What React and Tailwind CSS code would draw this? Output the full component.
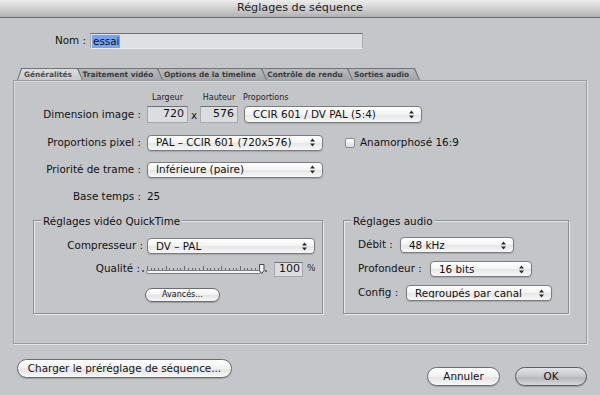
import React from 'react';

const Arrows = () => (
  <svg width="7" height="11" viewBox="0 0 7 11" className="shrink-0 mr-[6px]">
    <path d="M3.5 1.5 L6 4.5 H1 Z M3.5 9.5 L6 6.5 H1 Z" fill="#2b2b2b" />
  </svg>
);

const Popup = ({ w, h = 'h-[16px]', children }) => (
  <div className={`${w} ${h} shrink-0 flex items-center rounded-[4px] border border-[#7c7c7e] bg-[linear-gradient(#ffffff,#f3f3f3_50%,#e6e6e6_52%,#f7f7f7)] shadow-[0_1px_1px_rgba(0,0,0,0.15)]`}>
    <span className="flex-1 pl-[8px] whitespace-nowrap overflow-hidden leading-none">{children}</span>
    <Arrows />
  </div>
);

const Field = ({ w, children }) => (
  <div className={`${w} h-[17px] shrink-0 flex items-center justify-end pr-[3px] bg-[#dcdde0] border border-[#a7a8ab] border-t-[#707072] text-[11px]`}>
    {children}
  </div>
);

const Button = ({ w, h, dark, small, children }) => (
  <div
    className={`${w} ${h} shrink-0 flex items-center justify-center rounded-full border ${
      dark
        ? 'border-[#5e5e60] bg-[linear-gradient(#e2e3e5,#c6c7ca_50%,#b3b4b7_52%,#d6d7da)]'
        : 'border-[#6d6d6f] bg-[linear-gradient(#ffffff,#f1f1f1_50%,#e2e2e2_52%,#f8f8f8)]'
    } ${small ? 'text-[8px]' : 'text-[10.4px]'} shadow-[0_1px_1px_rgba(0,0,0,0.2)]`}
  >
    {children}
  </div>
);

const Slider = () => {
  const ticks = Array.from({ length: 31 }, (_, i) => i);
  return (
    <div className="relative w-[125px] h-[14px] shrink-0 flex items-center">
      <div className="w-[2px] h-[2px] bg-[#444] rounded-full mt-[3px]" />
      <div className="ml-[2px] mr-[6px] flex-1 h-[9px] flex flex-col justify-end">
        <div className="flex justify-between items-end h-[4px] px-[1px]">
          {ticks.map((i) => (
            <div key={i} className={`w-px ${i % 5 === 0 ? 'h-[4px]' : 'h-[2px]'} bg-[#6a6a6a]`} />
          ))}
        </div>
        <div className="h-[4px] rounded-full border border-[#7e7e80] bg-[#f4f4f4]" />
      </div>
      <svg width="9" height="12" viewBox="0 0 9 12" className="absolute right-[0px] top-[1px]">
        <path d="M1.5 1.5 H6 V7.5 L3.75 10.5 L1.5 7.5 Z" fill="#f2f2f2" stroke="#4a4a4a" strokeWidth="1" />
        <circle cx="8" cy="8" r="0.9" fill="#444" />
      </svg>
    </div>
  );
};

const Tab = ({ w, z, first, active, children }) => (
  <div
    className={`${w} ${z} h-[12px] shrink-0 relative -mr-[5px] bg-[#747476] ${
      first
        ? '[clip-path:polygon(0_100%,4px_0,calc(100%-5px)_0,100%_100%)]'
        : '[clip-path:polygon(0_100%,0_0,calc(100%-5px)_0,100%_100%)]'
    }`}
  >
    <div
      className={`h-[11px] mt-[1px] mr-[1px] ${first ? 'ml-[1px]' : ''} flex items-center justify-center pr-[4px] text-[7.4px] font-bold ${
        active
          ? 'bg-[linear-gradient(#dcdddf,#c8c9cc)] text-[#4a4a4c]'
          : 'bg-[linear-gradient(#b9babd,#a3a4a7)] text-[#3a3a3c]'
      } ${
        first
          ? '[clip-path:polygon(0_100%,4px_0,calc(100%-5px)_0,100%_100%)]'
          : '[clip-path:polygon(0_100%,0_0,calc(100%-5px)_0,100%_100%)]'
      } whitespace-nowrap`}
    >
      {children}
    </div>
  </div>
);

const Group = ({ w, title, children }) => (
  <div className={`${w} h-[94px] shrink-0 border border-[#8f8f92] shadow-[inset_1px_1px_0_#e9e9eb,1px_1px_0_#e9e9eb] flex flex-col`}>
    <span className="-mt-[6px] ml-[7px] px-[2px] w-fit leading-[12px] bg-[#c4c5c9]">{title}</span>
    {children}
  </div>
);

export default function App() {
  return (
    <div className="w-[600px] h-[395px] overflow-hidden bg-[#c5c6ca] font-['DejaVu_Sans',sans-serif] text-[10.4px] text-[#111] flex flex-col">
      {/* title bar */}
      <div className="h-[18px] shrink-0 flex items-center justify-center border-b border-[#6c6c6e] bg-[linear-gradient(#ececec,#d0d0d0_50%,#b2b2b4)] text-[11.2px] text-[#1c1c1c]">
        Réglages de séquence
      </div>

      {/* Nom */}
      <div className="mt-[15px] h-[16px] flex items-center">
        <span className="w-[86px] text-right">Nom :</span>
        <div className="ml-[4px] w-[273px] h-[16px] flex items-center bg-[#dfe0e3] border border-[#a9aaad] border-t-[#717173] border-b-[#ececee]">
          <span className="ml-[1px] px-[1px] bg-[#79a3ec] leading-[13px]">essai</span>
        </div>
      </div>

      {/* tabs */}
      <div className="mt-[19px] h-[12px] pl-[17px] flex items-end">
        <Tab w="w-[66px]" z="z-50" first active>Généralités</Tab>
        <Tab w="w-[85px]" z="z-40">Traitement vidéo</Tab>
        <Tab w="w-[109px]" z="z-30">Options de la timeline</Tab>
        <Tab w="w-[91px]" z="z-20">Contrôle de rendu</Tab>
        <Tab w="w-[72px]" z="z-10">Sorties audio</Tab>
      </div>

      {/* panel */}
      <div className="mx-[13px] w-[574px] h-[264px] shrink-0 border border-[#9a9b9e] shadow-[inset_1px_1px_0_#d9dadd,1px_1px_0_#e6e6e8] bg-[#c4c5c9] flex flex-col">
        <div className="mt-[11px] h-[12px] flex items-center text-[8px] text-[#222]">
          <span className="w-[133px]" />
          <span className="w-[41px] text-center">Largeur</span>
          <span className="w-[12px]" />
          <span className="w-[38px] text-center">Hauteur</span>
          <span className="ml-[5px]">Proportions</span>
        </div>

        <div className="mt-[2px] h-[17px] flex items-center">
          <span className="w-[127px] text-right">Dimension image :</span>
          <div className="ml-[6px]">
            <Field w="w-[41px]">720</Field>
          </div>
          <span className="w-[12px] text-center mt-[3px]">x</span>
          <Field w="w-[38px]">576</Field>
          <div className="ml-[6px]">
            <Popup w="w-[178px]" h="h-[17px]">CCIR 601 / DV PAL (5:4)</Popup>
          </div>
        </div>

        <div className="mt-[11px] h-[17px] flex items-center">
          <span className="w-[127px] text-right">Proportions pixel :</span>
          <div className="ml-[6px]">
            <Popup w="w-[176px]">PAL – CCIR 601 (720x576)</Popup>
          </div>
          <div className="ml-[22px] w-[10px] h-[10px] rounded-[2px] border border-[#8a8a8c] bg-[linear-gradient(#ffffff,#dcdcdc)]" />
          <span className="ml-[5px]">Anamorphosé 16:9</span>
        </div>

        <div className="mt-[10px] h-[17px] flex items-center">
          <span className="w-[127px] text-right">Priorité de trame :</span>
          <div className="ml-[6px]">
            <Popup w="w-[176px]">Inférieure (paire)</Popup>
          </div>
        </div>

        <div className="mt-[10px] h-[17px] flex items-center">
          <span className="w-[127px] text-right">Base temps :</span>
          <span className="ml-[6px]">25</span>
        </div>

        <div className="mt-[15px] pl-[19px] flex">
          <Group w="w-[290px]" title="Réglages vidéo QuickTime">
            <div className="mt-[11px] h-[16px] flex items-center">
              <span className="w-[109px] text-right">Compresseur :</span>
              <div className="ml-[4px]">
                <Popup w="w-[168px]">DV – PAL</Popup>
              </div>
            </div>
            <div className="mt-[8px] h-[14px] flex items-center">
              <span className="w-[106px] text-right">Qualité :</span>
              <div className="ml-[2px]">
                <Slider />
              </div>
              <div className="ml-[7px] w-[29px] h-[15px] flex items-center justify-end pr-[2px] bg-[#dcdde0] border border-[#a7a8ab] border-t-[#707072] text-[11px]">
                100
              </div>
              <span className="ml-[4px] text-[9px] text-[#333]">%</span>
            </div>
            <div className="mt-[12px] ml-[111px]">
              <Button w="w-[75px]" h="h-[14px]" small>Avancés...</Button>
            </div>
          </Group>

          <div className="ml-[20px]">
            <Group w="w-[226px]" title="Réglages audio">
              <div className="mt-[10px] h-[16px] pl-[14px] flex items-center">
                <span className="w-[42px]">Débit :</span>
                <Popup w="w-[114px]">48 kHz</Popup>
              </div>
              <div className="mt-[8px] h-[16px] pl-[14px] flex items-center">
                <span className="w-[72px]">Profondeur :</span>
                <Popup w="w-[102px]">16 bits</Popup>
              </div>
              <div className="mt-[8px] h-[16px] pl-[14px] flex items-center">
                <span className="w-[48px]">Config :</span>
                <Popup w="w-[146px]">Regroupés par canal</Popup>
              </div>
            </Group>
          </div>
        </div>
      </div>

      {/* bottom buttons */}
      <div className="mt-[15px] pl-[17px] pr-[13px] flex justify-between items-start">
        <Button w="w-[215px]" h="h-[19px]">Charger le préréglage de séquence...</Button>
        <div className="mt-[8px] flex gap-[15px]">
          <Button w="w-[73px]" h="h-[19px]">Annuler</Button>
          <Button w="w-[72px]" h="h-[19px]" dark>OK</Button>
        </div>
      </div>
    </div>
  );
}
